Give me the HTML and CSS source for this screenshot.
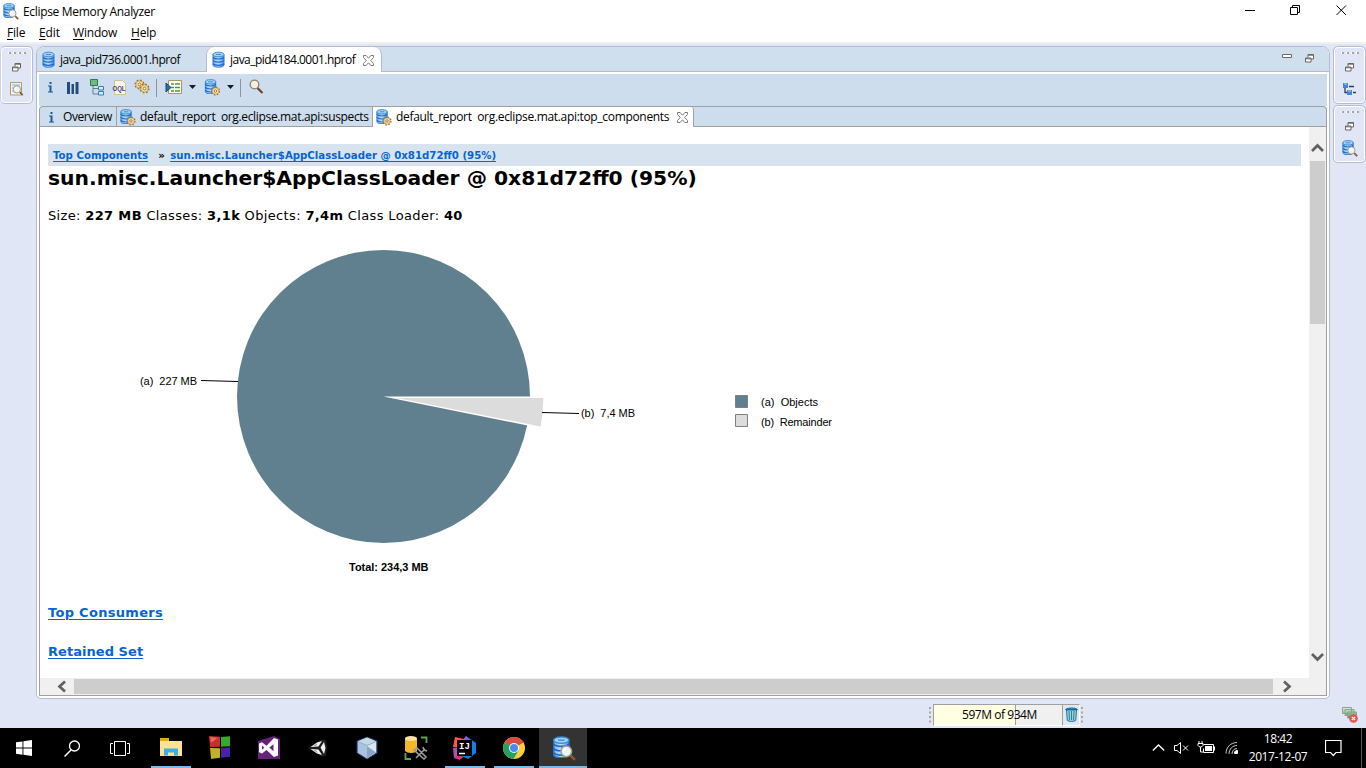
FILE: index.html
```html
<!DOCTYPE html>
<html lang="en">
<head>
<meta charset="utf-8">
<title>Eclipse Memory Analyzer</title>
<link rel="stylesheet" href="styles.css">
</head>
<body>
<svg class="defs" width="0" height="0" aria-hidden="true">
  <defs>
    <linearGradient id="blue" x1="0" x2="1"><stop offset="0" stop-color="#69b4ef"/><stop offset=".45" stop-color="#b9e2fb"/><stop offset="1" stop-color="#4b97e2"/></linearGradient>
    <linearGradient id="green" x1="0" x2="0" y1="0" y2="1"><stop offset="0" stop-color="#e3f0df"/><stop offset="1" stop-color="#4d9b55"/></linearGradient>
    <symbol id="db" viewBox="0 0 16 16">
      <path d="M2 3v10.500c0 1.300 2 2.200 5.500 2.200s5.500-.9 5.500-2.200V3z" fill="url(#blue)" stroke="#2a78c9"/>
      <path d="M2 5.800c1 1.300 3 1.700 5.500 1.700S12 7 13 5.800M2 9c1 1.300 3 1.700 5.500 1.700S12 10.300 13 9M2 12.200c1 1.300 3 1.700 5.500 1.700s4.500-.4 5.500-1.700" fill="none" stroke="#1f62cc" stroke-width="1.200"/>
      <ellipse cx="7.500" cy="3" rx="5.500" ry="2.300" fill="#a5d3f5" stroke="#3a88d4"/>
      <path d="M5 3h5" stroke="#3f8bd4"/>
    </symbol>
    <symbol id="gear" viewBox="0 0 10 10">
      <circle cx="5" cy="5" r="3.900" fill="none" stroke="#94702f" stroke-width="1.400" stroke-dasharray="1.530 1.530"/>
      <circle cx="5" cy="5" r="3.300" fill="#f8dc98" stroke="#b78c40" stroke-width=".6"/>
      <circle cx="5" cy="5" r="1.200" fill="#fff" stroke="#8d6a30" stroke-width=".8"/>
    </symbol>
    <symbol id="mag" viewBox="0 0 10 10">
      <path d="M6.500 6.500l2.800 2.800" stroke="#8a5a35" stroke-width="1.600"/>
      <circle cx="4" cy="4" r="3.300" fill="#edf4f8" stroke="#a39a8a" stroke-width=".9"/>
      <path d="M2.300 4a2 2 0 0 1 1.700-1.700" fill="none" stroke="#fff"/>
    </symbol>
    <symbol id="info" viewBox="0 0 5 11"><path d="M1.500 0h2v2h-2zM0 3.500h3.500V9.500H5v1H0v-1h1.500v-5H0z" fill="#1a5a96"/></symbol>
    <symbol id="dbgear" viewBox="0 0 17 17"><use href="#db" width="15" height="15"/><use href="#gear" x="7" y="7" width="10" height="10"/></symbol>
    <symbol id="dbmag" viewBox="0 0 17 17"><use href="#db" width="15" height="15"/><use href="#mag" x="6" y="6" width="11" height="11"/></symbol>
    <symbol id="restore" viewBox="0 0 9 9"><path d="M3 3.500V.5h5.500V5H6" fill="#fff" stroke="#6b665e"/><path d="M3 1.200h5.500" stroke="#6b665e"/><path d="M.5 4h5.500v4H.5z" fill="#fff" stroke="#6b665e"/><path d="M.5 4.800H6" stroke="#6b665e"/></symbol>
    <symbol id="close" viewBox="0 0 11 11"><path d="M.5.500h2.600l2.400 2.700L7.900.500h2.600v2L7.700 5.500l2.800 3v2H7.900L5.500 7.800l-2.400 2.700H.5v-2l2.800-3L.5 2.500z" fill="#fff" stroke="#6d6d6d" stroke-width=".9"/></symbol>
    <symbol id="drop" viewBox="0 0 7 4"><path d="M0 0h7L3.500 4z" fill="#1a1a1a"/></symbol>
    <symbol id="grip" viewBox="0 0 18 2"><path d="M0 1h3M5 1h3M10 1h3M15 1h3" stroke="#fff" stroke-width="2"/><path d="M1 1h2M6 1h2M11 1h2M16 1h2" stroke="#aaa598" stroke-width="2"/></symbol>
    <symbol id="vgrip" viewBox="0 0 2 16"><path d="M1 0v2M1 4.500v2M1 9v2M1 13.500v2" stroke="#aaa598" stroke-width="2"/></symbol>
  </defs>
</svg>

<header class="titlebar">
  <svg class="app-icon" width="17" height="17"><use href="#dbmag"/></svg>
  <span class="t-title">Eclipse Memory Analyzer</span>
  <svg class="win-buttons" width="106" height="20" viewBox="0 0 106 20" fill="none" stroke="#000">
    <path d="M0 10.500h10M45.500 7.500h7v7h-7zM47.500 7.500v-2h7v7h-2" /><path d="M91.500 5.500l9.500 9.500M101 5.500L91.500 15"/>
  </svg>
</header>
<nav class="menu"><span><u>F</u>ile</span><span><u>E</u>dit</span><span><u>W</u>indow</span><span><u>H</u>elp</span></nav>

<div class="workbench">
  <aside class="trim left">
    <div class="stack">
      <svg width="18" height="2"><use href="#grip"/></svg>
      <svg class="s-restore" width="9" height="9"><use href="#restore"/></svg>
      <svg class="s-icon" width="15" height="16" viewBox="0 0 15 16"><path d="M1.500 1.500h11v12.500h-11z" fill="#eef4f8" stroke="#b59a5b"/><path d="M3 4h8M3 7h2M3 10h2" stroke="#8ba9cc"/><use href="#mag" x="3.500" y="4" width="11" height="11"/></svg>
    </div>
  </aside>

  <main class="editor">
    <div class="tabs">
      <div class="tab"><svg width="16" height="17"><use href="#db"/></svg><span class="t-tab1">java_pid736.0001.hprof</span></div>
      <div class="tab active"><svg width="16" height="17"><use href="#db"/></svg><span class="t-tab2">java_pid4184.0001.hprof</span><svg class="x" width="11" height="11"><use href="#close"/></svg></div>
      <svg class="tab-min" width="10" height="4" viewBox="0 0 10 4"><path d="M.5.500h9v3h-9z" fill="#fff" stroke="#6b665e"/></svg>
      <svg class="tab-restore" width="9" height="9"><use href="#restore"/></svg>
    </div>
    <div class="view">
      <div class="toolbar">
        <svg width="216" height="20" viewBox="0 0 216 20">
          <use href="#info" x="1" y="3" width="5" height="11"/>
          <path d="M20 3h3v12h-3zM24.500 5h2.500v10h-2.500zM28.500 3h3v12h-3z" fill="#234d7c"/>
          <path d="M46 7v8h5M46 9.500h5" fill="none" stroke="#607d95"/><path d="M43.500.500h7v6h-7z" fill="#74b884" stroke="#2c7c49"/><path d="M51.500 7.500h5v3.500h-5zM51.500 12.500h5v3.500h-5z" fill="#dbeafa" stroke="#377fbd"/>
          <path d="M67.500 1.500h8l3 3v11h-11z" fill="#f7f5e8" stroke="#cfc293"/><text x="65.500" y="12" class="oql" textLength="13" lengthAdjust="spacingAndGlyphs">OQL</text>
          <use href="#gear" x="87" y="0" width="11" height="11"/><use href="#gear" x="92" y="4" width="11" height="11"/>
          <path d="M109.500 0v18M193.500 0v18" stroke="#8d949c"/>
          <path d="M121.500 1.500h13v13h-13z" fill="#fffef4" stroke="#a9975c"/><path d="M124 5h3M128 5h5M124 8.500h3M128 8.500h5M124 12h3M128 12h5" stroke="#3f9e4e" stroke-width="1.300"/><path d="M119 4l5 4.500-5 4.500z" fill="#2c6ca0" stroke="#174970"/>
          <use href="#drop" x="142" y="6" width="7" height="4"/>
          <use href="#dbgear" x="156.500" y="0" width="17" height="17"/>
          <use href="#drop" x="180" y="6" width="7" height="4"/>
          <path d="M210.500 9l5 5" stroke="#6e422c" stroke-width="2.200"/><circle cx="207.500" cy="5.500" r="4.300" fill="#f3efdc" stroke="#8c8068" stroke-width="1.300"/>
        </svg>
      </div>
      <div class="inner-tabs">
        <div class="itab i1"><svg class="i-info" width="5" height="11"><use href="#info"/></svg><span class="t-ov">Overview</span></div>
        <div class="itab i2"><svg width="17" height="17"><use href="#dbgear"/></svg><span class="t-sus">default_report&nbsp; org.eclipse.mat.api:suspects</span></div>
        <div class="itab i3"><svg width="17" height="17"><use href="#dbgear"/></svg><span class="t-top">default_report&nbsp; org.eclipse.mat.api:top_components</span><svg class="x" width="11" height="11"><use href="#close"/></svg></div>
        <div class="itab-rest"></div>
      </div>
      <div class="browser">
        <article class="page">
          <div class="crumbs"><a class="t-c1">Top Components</a><b class="raquo">»</b><a class="t-c2">sun.misc.Launcher$AppClassLoader @ 0x81d72ff0 (95%)</a></div>
          <h1><span>sun.misc.Launcher$AppClassLoader @ 0x81d72ff0 (95%)</span></h1>
          <p class="stats"><span>Size: <b>227 MB</b> Classes: <b>3,1k</b> Objects: <b>7,4m</b> Class Loader: <b>40</b></span></p>
          <svg class="chart" width="850" height="350" viewBox="48 237 850 350">
            <circle cx="383.500" cy="396.500" r="146.500" fill="#61808f"/>
            <path d="M383.500 396.500H532V427L527.600 425.500z" fill="#fff"/>
            <path d="M397 398H543.300A146.500 146.500 0 0 1 540.600 426.500z" fill="#dcdcdc"/>
            <path d="M384 396.500L400 398.500v1z" fill="#eee"/>
            <path d="M201 380.500L238 381.500M542 412.500L579 413.500" stroke="#000" fill="none"/>
            <text x="140" y="385" textLength="57">(a)&#160; 227 MB</text>
            <text x="581" y="417" textLength="54">(b)&#160; 7,4 MB</text>
            <text x="349" y="571" textLength="79.500" lengthAdjust="spacingAndGlyphs" font-weight="bold">Total: 234,3 MB</text>
            <path d="M735.500 395.500h12v12h-12z" fill="#61808f" stroke="#808080"/>
            <path d="M735.500 414.500h12v12h-12z" fill="#dcdcdc" stroke="#808080"/>
            <text x="761" y="406" textLength="57">(a)&#160; Objects</text>
            <text x="761" y="426" textLength="71">(b)&#160; Remainder</text>
          </svg>
          <h2><a class="t-tc">Top Consumers</a></h2>
          <h2><a class="t-rs">Retained Set</a></h2>
        </article>
        <div class="vscroll">
          <svg width="16" height="34" viewBox="0 0 16 34"><path d="M3 24l5.500-5.500L14 24" fill="none" stroke="#606060" stroke-width="2.700"/></svg>
          <div class="vthumb"></div>
          <svg class="vdown" width="16" height="34" viewBox="0 0 16 34"><path d="M3 10l5.500 5.500L14 10" fill="none" stroke="#606060" stroke-width="2.700"/></svg>
        </div>
        <div class="hscroll">
          <svg width="34" height="16" viewBox="0 0 34 16"><path d="M25 2.500L19.500 7.500 25 12.500" fill="none" stroke="#606060" stroke-width="2.700"/></svg>
          <div class="hthumb"></div>
          <svg width="34" height="16" viewBox="0 0 34 16"><path d="M11 2.500l5.500 5L11 12.500" fill="none" stroke="#606060" stroke-width="2.700"/></svg>
        </div>
      </div>
    </div>
  </main>

  <aside class="trim right">
    <div class="stack">
      <svg width="18" height="2"><use href="#grip"/></svg>
      <svg class="s-restore" width="9" height="9"><use href="#restore"/></svg>
      <svg class="s-icon" width="15" height="16" viewBox="0 0 15 16"><path d="M3 6v5.500h5M7 5.500h5M11 11.500h3" fill="none" stroke="#333b4d" stroke-width="1.300"/><path d="M1 2h5v5H1zM5 9h5v5H5z" fill="#3c86dc"/><path d="M2 3h3M6 10h3" stroke="#a9d7f8"/></svg>
    </div>
    <div class="stack">
      <svg width="18" height="2"><use href="#grip"/></svg>
      <svg class="s-restore" width="9" height="9"><use href="#restore"/></svg>
      <svg class="s-icon2" width="17" height="17"><use href="#dbmag"/></svg>
    </div>
  </aside>
</div>

<div class="status">
  <svg width="2" height="16"><use href="#vgrip"/></svg>
  <div class="heap"><div class="used"></div><span class="heap-text t-heap">597M of 934M</span></div>
  <div class="trash"><svg width="13" height="16" viewBox="0 0 13 16"><path d="M1.500 4h10l-.8 10.500c-1.500 1.200-6.900 1.200-8.400 0z" fill="#9fd6d2" stroke="#1c7199"/><path d="M4 5l.5 9M6.500 5v9M9 5l-.5 9" stroke="#2580a4"/><path d="M.5 3.500C2 1.500 11 1.500 12.500 3.500z" fill="#37a3bd" stroke="#176b93"/></svg></div>
  <svg width="2" height="16"><use href="#vgrip"/></svg>
  <svg class="jobs" width="17" height="17" viewBox="0 0 17 17"><path d="M.5.500h9v6h-9zM3 2.500h9v6H3zM5.500 5h9v6h-9z" fill="url(#green)" stroke="#86a690"/><circle cx="11.500" cy="11.500" r="4.300" fill="#df5650"/><path d="M9.800 9.800l3.400 3.400M13.200 9.800l-3.400 3.400" stroke="#fff" stroke-width="1.200"/></svg>
</div>

<footer class="taskbar">
  <div class="sys"><svg width="16" height="16" viewBox="0 0 16 16"><path d="M0 2.300L6.500 1.400v6.200H0zM7.400 1.200L16 0v7.600H7.400zM0 8.500h6.500v6.200L0 13.800zM7.400 8.500H16V16l-8.600-1.200z" fill="#fff"/></svg></div>
  <div class="sys"><svg width="16" height="17" viewBox="0 0 16 17"><path d="M7 10L.5 16.500" stroke="#fff" stroke-width="1.500"/><circle cx="10.500" cy="6" r="5" fill="none" stroke="#fff" stroke-width="1.300"/></svg></div>
  <div class="sys"><svg width="20" height="15" viewBox="0 0 20 15" fill="none" stroke="#fff"><path d="M4.500.500h11v14h-11zM3 2.500H.5v10H3M17 2.500h2.500v10H17"/></svg></div>
  <div class="apps">
    <div class="app run"><svg width="24" height="24" viewBox="0 0 24 24"><path d="M1 2h9v3h13v15H1z" fill="#fcd767"/><path d="M1 2h9v3H1z" fill="#e9a91c"/><path d="M1 5h22v14.500H1z" fill="#ffe294"/><path d="M5 19.500v-7h14v7h-4v-3h-6v3z" fill="#39b0e6"/></svg></div>
    <div class="app"><svg width="24" height="24" viewBox="0 0 24 24"><path d="M1 0l11 .8v10L2 11z" fill="#c83028"/><path d="M13 1l9-.7v10L13 10.700z" fill="#35a82e"/><path d="M2 12l10 .3v9.500L3 23z" fill="#bdb32b"/><path d="M13 12l9-.7v9.400l-9 1z" fill="#4921a8"/><path d="M2 1l8 .7-7 5z" fill="#e66a60"/></svg></div>
    <div class="app"><svg width="24" height="24" viewBox="0 0 24 24"><path d="M1 5L17 0l6 3v20H1z" fill="#68217a"/><path d="M17 2l4 1.500v16L17 21 9.500 14 5 17.500l-3-1.200V7.500L5 6.200l4.500 3.500zM16.500 8.200L12.300 11.600l4.200 3.600zM5 9.500v4.300l2.300-2.100z" fill="#fff" fill-rule="evenodd"/></svg></div>
    <div class="app"><svg width="20" height="22" viewBox="0 0 20 22"><path d="M0 11L14 2.500l4 .5 1 7-1 9-4 .5z" fill="#1d1d1d"/><path d="M2.500 10L9 5.500l5-1.500-3.500 5.500zM2.500 12l8 .5L14 18l-5-1.500zM12.500 10.500L16 5l1.500 6-1.500 6z" fill="#f2f2f2"/><path d="M5 8.800l4.500-2.300L8 9zM5 13l3 .3L10 16z" fill="#999"/></svg></div>
    <div class="app"><svg width="24" height="24" viewBox="0 0 24 24"><path d="M12 1l10 4v12l-10 6L2 17V5z" fill="#8ca9ca" stroke="#203468"/><path d="M12 1.500l9 3.700L12 9 3 5.200z" fill="#c3dbdc"/><path d="M3 6l9 4v12.500L3 16.500z" fill="#a9c3e2"/><path d="M12 10l9-4v10.500l-9 6z" fill="#dce7f1"/><path d="M12 10v12.500l9-6z" fill="#8ba5c6"/></svg></div>
    <div class="app"><svg width="24" height="24" viewBox="0 0 24 24"><path d="M1 2v13c2 2.500 10 2.500 12 0V2z" fill="#f4b52b"/><ellipse cx="7" cy="2.500" rx="6" ry="2.500" fill="#ffe2a0"/><path d="M17 1.500h5.500V7M1.500 17v6H7" fill="none" stroke="#5ba55b" stroke-width="1.800"/><path d="M10 14l3-2 9 9-2 2zM12 22l9-9M19 11l1 3 3 1" fill="none" stroke="#9a9a9a" stroke-width="1.600"/></svg></div>
    <div class="app run"><svg width="24" height="24" viewBox="0 0 24 24"><path d="M0 12l10-2-3 14-6-2z" fill="#b54cbb"/><path d="M2 1l9 2-2 8H0z" fill="#fb5a36"/><path d="M1 22l7 1 6-5H6z" fill="#dd336a"/><path d="M13 0l10 7v10l-8 6-7-3z" fill="#157fe8"/><path d="M13 0L8 6l9-1z" fill="#9e56d7"/><path d="M4 4h15v16H4z"/><path d="M6 17.500h6" stroke="#fff" stroke-width="1.500"/><text x="6" y="13" class="ij">IJ</text></svg></div>
    <div class="app run"><svg width="24" height="24" viewBox="0 0 24 24"><circle cx="12" cy="12" r="11" fill="#fcd13c"/><path d="M12 12L2.500 6.500a11 11 0 0 1 19 0z" fill="#dd4b3d"/><path d="M2.500 6.500a11 11 0 0 0 9 16.500l5-8.500-4.500-3z" fill="#20a15d"/><path d="M12 7h10a11 11 0 0 0-1-2H10z" fill="#dd4b3d"/><circle cx="12" cy="12" r="5" fill="#fff"/><circle cx="12" cy="12" r="4" fill="#4a8af4"/></svg></div>
    <div class="app run current"><svg width="25" height="25"><use href="#dbmag"/></svg></div>
  </div>
  <div class="tray">
    <svg width="88" height="20" viewBox="0 0 88 20" fill="none" stroke="#fff"><path d="M.8 12.500L6.500 7l5.700 5.500" stroke-width="1.300"/><path d="M22.500 7.500h2.500l3.500-3v11l-3.500-3h-2.500zM31 7.500l5 5M36 7.500l-5 5"/><path d="M51.500 6.500h10v8h-10v-4M62.500 8.500v4"/><path d="M53 8h7v5h-7z" fill="#fff" stroke="none"/><path d="M47 3v2M50 3v2M46 5.500h5v2c-1 2-4 2-5 0zM48.500 9v5H51"/><path d="M74 15.500C74 9 79 4.500 85 4.500M77 16c0-5 3.500-8.500 8-8.500M80 16c0-3 2-5.500 5-5.500" stroke="#ccc"/><path d="M82.500 15.500v-1.500l1.500-1.500h1.500v3z" fill="#fff"/></svg>
    <div class="clock"><span class="t-time">18:42</span><span class="t-date">2017-12-07</span></div>
    <svg class="note" width="17" height="17" viewBox="0 0 17 17"><path d="M.5.500h15.500v12h-5l-2.700 3-2.700-3H.5z" fill="none" stroke="#fff" stroke-width="1.200"/></svg>
    <div class="peek"></div>
  </div>
</footer>
</body>
</html>
```
FILE: styles.css
```css
* { box-sizing: border-box; }
body { margin: 0; width: 1366px; height: 768px; overflow: hidden; display: flex; flex-direction: column; background: #e1e6f6; color: #000; font: 12px/16px "Open Sans", "Noto Sans", sans-serif; }
svg { display: block; flex: none; }
span, a { white-space: nowrap; }
.defs { position: absolute; }

.titlebar { height: 24px; background: #fff; display: flex; align-items: flex-start; padding: 3px 15px 0 2px; }
.titlebar span { margin: 1px 0 0 4px; }
.win-buttons { margin: -3px 0 0 auto; }
.menu { height: 20px; background: #fff; border-bottom: 2px solid #f0f0f0; display: flex; padding-top: 1px; }
.menu span:nth-child(1) { margin-left: 7px; width: 32px; letter-spacing: -.2px; }
.menu span:nth-child(2) { width: 34px; letter-spacing: -.1px; }
.menu span:nth-child(3) { width: 58px; letter-spacing: -.2px; }
.menu span:nth-child(4) { letter-spacing: -.2px; }
.menu u { text-underline-offset: 2px; }

.workbench { height: 656px; display: flex; padding-top: 2px; }
.trim { flex: none; display: flex; flex-direction: column; }
.left { width: 36px; }
.right { width: 33px; margin-left: auto; gap: 1px; }
.stack { width: 33px; height: 58px; border: 1px solid #b5bbd2; border-radius: 5px; box-shadow: inset 0 0 0 1px #fff; display: flex; flex-direction: column; align-items: center; padding-top: 5px; }
.left .stack { border-left-color: #d0d4e4; }
.s-restore { margin-top: 9px; }
.s-icon { margin-top: 9px; }
.s-icon2 { margin-top: 9px; }

.editor { width: 1294px; height: 653px; border: 1px solid #b4bad0; border-radius: 8px 8px 5px 5px; background: #fff; overflow: hidden; display: flex; flex-direction: column; }
.tabs { height: 25px; background: #d0dfee; border-bottom: 1px solid #b4bad0; display: flex; align-items: flex-start; }
.tab { height: 25px; width: 169px; display: flex; align-items: flex-start; padding: 4px 0 0 4px; }
.tab span { margin: 1px 0 0 3px; }
.tab.active { width: 176px; background: #fff; border: 1px solid #b4bad0; border-width: 0 1px; border-radius: 8px 8px 0 0; }
.x { margin: 4px 0 0 auto; }
.active .x { margin-right: 7px; }
.i3 .x { margin-right: 5px; }
.tab-min { margin: 7px 0 0 auto; }
.tab-restore { margin: 7px 15px 0 13px; }
.view { margin: 2px 2px 0; display: flex; flex-direction: column; }
.toolbar { height: 32px; background: #cddded; padding: 5px 0 0 8px; }
.toolbar svg { overflow: visible; }
.oql { font: bold 8px "Liberation Sans", sans-serif; fill: #4a3c78; }
.inner-tabs { height: 21px; display: flex; background: #cddded; border-top: 1px solid #a0a0a0; border-left: 1px solid #a0a0a0; border-right: 1px solid #a0a0a0; border-radius: 4px 4px 0 0; overflow: hidden; }
.itab { display: flex; border-right: 1px solid #a0a0a0; border-bottom: 1px solid #a0a0a0; padding-top: 1px; }
.itab > svg:first-child { margin-top: 1px; }
.itab > .i-info:first-child { margin-top: 4px; }
.itab span { margin-top: 1px; }
.i1 { width: 77px; padding-left: 9px; }
.i1 span { margin-left: 9px; }
.i2 { width: 256px; padding-left: 2px; }
.i2 span, .i3 span { margin-left: 4px; }
.i3 { width: 321px; padding-left: 2px; background: #fff; border-bottom: 0; border-top-right-radius: 3px; }
.itab-rest { flex: 1; border-bottom: 1px solid #a0a0a0; }
.browser { height: 569px; border: 1px solid #a0a0a0; border-top: 0; display: grid; grid-template: 551px 17px / 1269px 1fr; background: #f0f0f0; }
.page { background: #fff; overflow: hidden; padding: 17px 8px 0; font-family: Verdana, "DejaVu Sans", sans-serif; }
.crumbs { height: 22px; background: #d7e4ef; padding-left: 5px; font: bold 10.200px/23px Verdana, "DejaVu Sans", sans-serif; display: flex; }
.raquo { margin: 0 4px 0 10px; width: 8px; }
a { color: #0864d0; text-decoration: underline; text-decoration-thickness: 1px; text-underline-offset: 2px; }
h1 { margin: 0; height: 26px; font-size: 20.300px; line-height: 25px; }
.stats { margin: 15px 0 0; height: 18px; font-size: 13px; line-height: 18px; letter-spacing: .35px; }
.chart { margin: 12px 0 17px; }
.chart text { font-family: "Liberation Sans", Arial, sans-serif; font-size: 11px; white-space: pre; }
h2 { margin: 0 0 21px; font-size: 13px; line-height: 18px; }
.vscroll { display: flex; flex-direction: column; padding-right: 1px; }
.vthumb { height: 163px; margin-left: 1px; background: #cdcdcd; }
.vdown { margin-top: auto; }
.hscroll { grid-column: 1 / 3; display: flex; align-items: flex-start; padding-top: 1px; }
.hthumb { width: 1199px; height: 15px; background: #cdcdcd; }

.status { height: 28px; display: flex; align-items: flex-start; padding: 4px 7px 0 929px; }
.status > svg { margin-top: 3px; }
.heap { position: relative; width: 130px; height: 22px; margin-left: 2px; border: 1px solid #a0a0a0; border-bottom-color: #fff; background: #f0f0f0; }
.used { width: 82px; height: 20px; background: #ffffe1; border-right: 1px solid #a0a0a0; }
.heap-text { position: absolute; left: 28px; top: 2px; }
.trash { width: 17px; height: 22px; border: 1px solid #fff; border-top-color: #a0a0a0; border-left: 0; padding: 1px 0 0 2px; margin-right: 1px; }
.status > .jobs { margin-left: auto; }

.taskbar { height: 40px; background: #000; display: flex; color: #fff; }
.sys { width: 48px; display: grid; place-items: center; }
.apps { display: flex; gap: 1px; margin-left: 3px; }
.app { position: relative; width: 48px; height: 40px; display: grid; place-items: center; }
.run::after { content: ""; position: absolute; left: 4px; right: 4px; bottom: 0; height: 2px; background: #76b9ed; }
.current { background: #333; }
.current::after { left: 0; right: 0; }
.ij { font: bold 9px "Liberation Mono", monospace; fill: #fff; }
.tray { margin-left: auto; display: flex; }
.tray > svg:first-child { margin-top: 10px; }
.clock { width: 60px; margin: 2px 1px 0 8px; display: flex; flex-direction: column; align-items: center; line-height: 18px; }
.note { margin: 12px 0 0 16px; }
.peek { width: 5px; margin-left: 19px; border-left: 1px solid #555; }

.t-title { letter-spacing: -.32px; }
.t-tab1 { letter-spacing: -.48px; }
.t-tab2 { letter-spacing: -.53px; }
.t-sus { letter-spacing: -.34px; }
.t-top { letter-spacing: -.32px; }
.t-ov { letter-spacing: -.4px; }
.t-tc { letter-spacing: .3px; }
.t-rs { letter-spacing: .05px; }
.t-heap, .t-time { letter-spacing: -.45px; }
.t-date { letter-spacing: -.4px; }
```
